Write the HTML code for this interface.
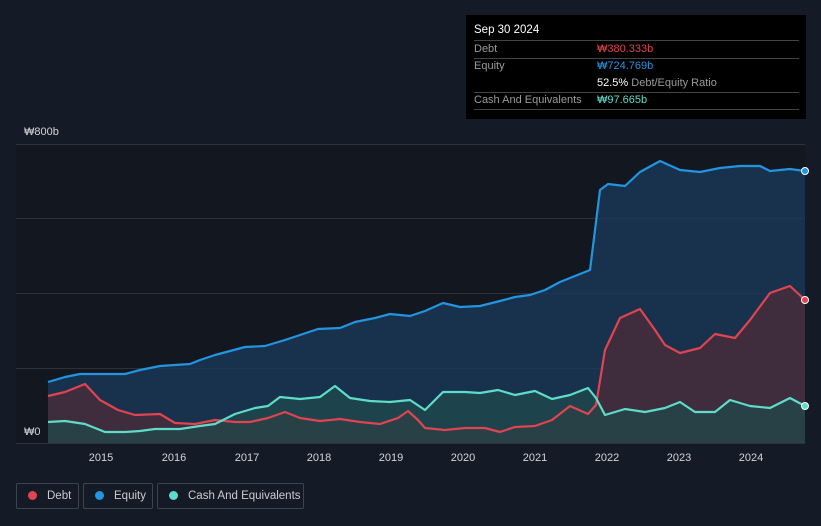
<!DOCTYPE html>
<html><head><meta charset="utf-8"><style>
body{margin:0;width:821px;height:526px;background:#151b26;font-family:"Liberation Sans",sans-serif;overflow:hidden;position:relative}
.tip{position:absolute;left:466px;top:15px;width:340px;height:104px;background:#000;color:#fff;font-size:11px}
.tip .row{position:absolute;left:8px;width:325px;border-bottom:1px solid #444;height:17px;line-height:17px}
.lbl{color:#9a9a9a}
.val{position:absolute;left:123px;top:0}
.leg{position:absolute;top:483px;height:26px;border:1px solid #3d4350;border-radius:2px;color:#c8ccd2;font-size:11.5px;line-height:25px;box-sizing:border-box;white-space:nowrap;overflow:hidden}
.dot{display:inline-block;width:9px;height:9px;border-radius:50%;margin:0 10px 0 11px;vertical-align:-1px}
</style></head><body>
<svg width="821" height="526" style="position:absolute;left:0;top:0">
<rect x="16" y="144" width="789" height="299" fill="#131820"/>
<g stroke="#2c323c" stroke-width="1">
<line x1="16" y1="144.5" x2="805" y2="144.5"/><line x1="16" y1="218.5" x2="805" y2="218.5"/>
<line x1="16" y1="293.5" x2="805" y2="293.5"/><line x1="16" y1="368.5" x2="805" y2="368.5"/>
<line x1="16" y1="443.5" x2="805" y2="443.5"/></g>
<polygon fill="#1a3a5a" fill-opacity="0.8" points="48,382 65,377 80,374 100,374 125,374 140,370 160,366 190,364 200,360 215,355 230,351 245,347 265,346 285,340 300,335 318,329 340,328 355,322 375,318 390,314 410,316 425,311 443,303 460,307 480,306 500,301 515,297 530,295 545,290 560,282 575,276 590,270 600,190 608,184 625,186 640,172 660,161 680,170 700,172 720,168 740,166 760,166 770,171 790,169 805,171 805,443 48,443"/>
<polygon fill="#4a2a3a" fill-opacity="0.8" points="48,396 65,392 85,384 100,400 118,410 135,415 160,414 175,423 195,424 215,420 235,422 250,422 268,418 285,412 300,418 320,421 340,419 360,422 380,424 398,418 408,411 418,420 425,428 445,430 465,428 485,428 500,432 515,427 535,426 552,420 570,406 588,414 596,405 605,350 620,318 640,309 655,330 665,345 680,353 700,348 715,334 735,338 750,320 770,293 790,286 805,300 805,443 48,443"/>
<polygon fill="#1f4a4c" fill-opacity="0.7" points="48,422 65,421 85,424 105,432 125,432 140,431 155,429 180,429 200,426 215,424 235,414 255,408 268,406 280,397 300,399 320,397 335,386 350,398 370,401 390,402 410,400 425,410 443,392 465,392 480,393 498,390 515,395 535,391 552,399 570,395 588,388 596,398 605,415 625,409 645,412 665,408 680,402 695,412 715,412 730,400 750,406 770,408 790,398 805,406 805,443 48,443"/>
<g fill="none" stroke-width="2.2" stroke-linejoin="round">
<polyline stroke="#2394df" points="48,382 65,377 80,374 100,374 125,374 140,370 160,366 190,364 200,360 215,355 230,351 245,347 265,346 285,340 300,335 318,329 340,328 355,322 375,318 390,314 410,316 425,311 443,303 460,307 480,306 500,301 515,297 530,295 545,290 560,282 575,276 590,270 600,190 608,184 625,186 640,172 660,161 680,170 700,172 720,168 740,166 760,166 770,171 790,169 805,171"/>
<polyline stroke="#e04451" points="48,396 65,392 85,384 100,400 118,410 135,415 160,414 175,423 195,424 215,420 235,422 250,422 268,418 285,412 300,418 320,421 340,419 360,422 380,424 398,418 408,411 418,420 425,428 445,430 465,428 485,428 500,432 515,427 535,426 552,420 570,406 588,414 596,405 605,350 620,318 640,309 655,330 665,345 680,353 700,348 715,334 735,338 750,320 770,293 790,286 805,300"/>
<polyline stroke="#5fdcc9" points="48,422 65,421 85,424 105,432 125,432 140,431 155,429 180,429 200,426 215,424 235,414 255,408 268,406 280,397 300,399 320,397 335,386 350,398 370,401 390,402 410,400 425,410 443,392 465,392 480,393 498,390 515,395 535,391 552,399 570,395 588,388 596,398 605,415 625,409 645,412 665,408 680,402 695,412 715,412 730,400 750,406 770,408 790,398 805,406"/>
</g>
<circle cx="805" cy="171" r="3.5" fill="#2394df" stroke="#fff" stroke-width="1"/>
<circle cx="805" cy="300" r="3.5" fill="#e04451" stroke="#fff" stroke-width="1"/>
<circle cx="805" cy="406" r="3.5" fill="#5fdcc9" stroke="#fff" stroke-width="1"/>
<g fill="#d0d4da" font-size="11" font-family="Liberation Sans,sans-serif">
<text x="24" y="135">₩800b</text><text x="24" y="435">₩0</text>
<g text-anchor="middle">
<text x="101" y="461">2015</text><text x="174" y="461">2016</text><text x="247" y="461">2017</text><text x="319" y="461">2018</text><text x="391" y="461">2019</text><text x="463" y="461">2020</text><text x="535" y="461">2021</text><text x="607" y="461">2022</text><text x="679" y="461">2023</text><text x="751" y="461">2024</text>
</g></g>
</svg>
<div class="tip">
<div style="position:absolute;left:8px;top:9px;font-size:11.5px">Sep 30 2024</div>
<div style="position:absolute;left:8px;top:25px;width:325px;border-top:1px solid #444"></div>
<div class="row" style="top:26px"><span class="lbl">Debt</span><span class="val" style="color:#e2434e">₩380.333b</span></div>
<div class="row" style="top:43px;border:none"><span class="lbl">Equity</span><span class="val" style="color:#2394df">₩724.769b</span></div>
<div class="row" style="top:60px"><span class="val"><b style="font-weight:normal;color:#fff">52.5%</b> <span class="lbl">Debt/Equity Ratio</span></span></div>
<div class="row" style="top:77px"><span class="lbl">Cash And Equivalents</span><span class="val" style="color:#5fdcc9">₩97.665b</span></div>
</div>
<div class="leg" style="left:16px;width:63px"><span class="dot" style="background:#e04451"></span>Debt</div>
<div class="leg" style="left:83px;width:70px"><span class="dot" style="background:#2394df"></span>Equity</div>
<div class="leg" style="left:157px;width:147px"><span class="dot" style="background:#5fdcc9"></span>Cash And Equivalents</div>
</body></html>
